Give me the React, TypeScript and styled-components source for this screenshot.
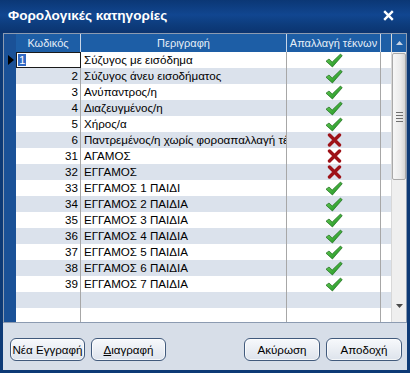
import React from "react";
import styled, { createGlobalStyle } from "styled-components";

const Global = createGlobalStyle`
  html, body { margin: 0; padding: 0; background: #ffffff; }
  body { font-family: "Liberation Sans", Arial, sans-serif; }
  * { box-sizing: border-box; }
`;

const Window = styled.div`
  width: 410px;
  height: 373px;
  background: #0d3a76;
  padding: 0 3px 3px 3px;
  display: flex;
  flex-direction: column;
`;

const TitleBar = styled.div`
  height: 33px;
  margin: 0 -3px;
  padding: 0 16px 3px 8px;
  display: flex;
  align-items: center;
  justify-content: space-between;
  background: linear-gradient(180deg, #0b3775 0%, #114690 45%, #0d3c7c 75%, #0b3470 100%);
`;

const Title = styled.div`
  color: #ffffff;
  font-weight: bold;
  font-size: 13.6px;
`;

const Body = styled.div`
  flex: 1;
  display: flex;
  flex-direction: column;
  background: #d7dee8;
`;

const GridFrame = styled.div`
  height: 290px;
  border: 1px solid #8c9bb1;
  display: flex;
  overflow: hidden;
  background: #ffffff;
`;

const Indicator = styled.div`
  width: 12px;
  background: #1a5197;
  display: flex;
  flex-direction: column;
  padding-top: 18px;
`;

const IndicatorCell = styled.div`
  height: 16px;
  display: flex;
  align-items: center;
  justify-content: center;
`;

const Arrow = styled.div`
  width: 0;
  height: 0;
  border-top: 5px solid transparent;
  border-bottom: 5px solid transparent;
  border-left: 6px solid #000000;
  margin-left: 1px;
`;

const Main = styled.div`
  flex: 1;
  display: flex;
  flex-direction: column;
  min-width: 0;
`;

const cols = "65px 206px 94px 1fr";

const HeaderRow = styled.div`
  height: 18px;
  display: grid;
  grid-template-columns: ${cols};
  background: #1d5ea6;
`;

const HeaderCell = styled.div<{ $last?: boolean }>`
  color: #e6eef8;
  font-size: 11px;
  text-align: center;
  line-height: 18px;
  white-space: nowrap;
  overflow: hidden;
  border-right: ${(p) => (p.$last ? "none" : "1px solid #c8d6e8")};
`;

const Row = styled.div<{ $alt: boolean }>`
  height: 16px;
  flex-shrink: 0;
  display: grid;
  grid-template-columns: ${cols};
  background: ${(p) => (p.$alt ? "#dbe2ec" : "#ffffff")};
`;

const Cell = styled.div<{ $align?: string; $last?: boolean }>`
  font-size: 11.6px;
  color: #000000;
  line-height: 16px;
  white-space: nowrap;
  overflow: hidden;
  padding: 0 2px 0 3px;
  border-right: ${(p) => (p.$last ? "none" : "1px solid #a7a7a7")};
  display: flex;
  align-items: center;
  justify-content: ${(p) =>
    p.$align === "right" ? "flex-end" : p.$align === "center" ? "center" : "flex-start"};
`;

const EditCell = styled.div`
  border: 1px solid #1a1a1a;
  background: #ffffff;
  display: flex;
  align-items: center;
  padding-left: 1px;
`;

const Selected = styled.span`
  background: #316ac5;
  color: #ffffff;
  font-size: 11.6px;
  line-height: 12px;
  padding: 0 1px;
`;

const ScrollBar = styled.div`
  width: 15px;
  display: flex;
  flex-direction: column;
  background: #efefef;
  border-left: 1px solid #d8d8d8;
`;

const ScrollTop = styled.div`
  height: 18px;
  background: #1d5ea6;
  display: flex;
  align-items: center;
  justify-content: center;
`;

const ScrollThumb = styled.div`
  height: 127px;
  margin: 1px 0 0 0;
  border: 1px solid #a9a9a9;
  border-radius: 2px;
  background: linear-gradient(90deg, #f7f7f7 0%, #ebebeb 60%, #d6d6d6 100%);
  display: flex;
  flex-direction: column;
  align-items: center;
  justify-content: center;
  gap: 2px;
`;

const Grip = styled.div`
  width: 7px;
  height: 1px;
  background: #6f6f6f;
`;

const ScrollTrack = styled.div`
  flex: 1;
  background: #efefef;
`;

const ScrollBottom = styled.div`
  height: 24px;
  display: flex;
  align-items: center;
  justify-content: center;
  padding-bottom: 8px;
`;

const Panel = styled.div`
  flex: 1;
  display: flex;
  align-items: flex-start;
  padding: 15px 5px 0 7px;
`;

const ButtonGroup = styled.div`
  display: flex;
  gap: 6px;
`;

const Spacer = styled.div`
  flex: 1;
`;

const Button = styled.button<{ $w: number }>`
  width: ${(p) => p.$w}px;
  height: 23px;
  border: 1px solid #415a7c;
  border-radius: 6px;
  background: linear-gradient(180deg, #f7f9fc 0%, #e9edf3 55%, #dde3ec 100%);
  font-family: "Liberation Sans", Arial, sans-serif;
  font-size: 11.6px;
  color: #000000;
  padding: 0;
  box-shadow: inset 0 0 0 1px rgba(255, 255, 255, 0.7);
`;

const Underline = styled.span`
  text-decoration: underline;
`;

const Check = () => (
  <svg width="18" height="15" viewBox="0 0 18 15">
    <defs>
      <linearGradient id="cg" x1="0" y1="0" x2="1" y2="1">
        <stop offset="0" stopColor="#6fd15a" />
        <stop offset="1" stopColor="#138a1c" />
      </linearGradient>
    </defs>
    <path
      d="M1 8.2 L4 6 L7.2 9 L15.5 1 L17.2 2.8 L7.4 14 Z"
      fill="url(#cg)"
      stroke="#1b6a1b"
      strokeWidth="0.7"
      strokeLinejoin="round"
    />
  </svg>
);

const Cross = () => (
  <svg width="15" height="14" viewBox="0 0 15 14">
    <path
      d="M2.5 2 L12.5 12 M12.5 2 L2.5 12"
      stroke="#9e1218"
      strokeWidth="3.4"
      strokeLinecap="round"
    />
  </svg>
);

const Close = () => (
  <svg width="11" height="11" viewBox="0 0 11 11">
    <path d="M1.2 1.2 L9.8 9.8 M9.8 1.2 L1.2 9.8" stroke="#ffffff" strokeWidth="2.4" />
  </svg>
);

const UpArrow = () => (
  <svg width="7" height="4" viewBox="0 0 7 4">
    <path d="M0 4 L3.5 0 L7 4 Z" fill="#c8d4e4" />
  </svg>
);

const DownArrow = () => (
  <svg width="7" height="4" viewBox="0 0 7 4">
    <path d="M0 0 L3.5 4 L7 0 Z" fill="#4a4a4a" />
  </svg>
);

const rows: [string, string, boolean][] = [
  ["1", "Σύζυγος με εισόδημα", true],
  ["2", "Σύζυγος άνευ εισοδήματος", true],
  ["3", "Ανύπαντρος/η", true],
  ["4", "Διαζευγμένος/η", true],
  ["5", "Χήρος/α", true],
  ["6", "Παντρεμένος/η χωρίς φοροαπαλλαγή τέκνων", false],
  ["31", "ΑΓΑΜΟΣ", false],
  ["32", "ΕΓΓΑΜΟΣ", false],
  ["33", "ΕΓΓΑΜΟΣ 1 ΠΑΙΔΙ", true],
  ["34", "ΕΓΓΑΜΟΣ 2 ΠΑΙΔΙΑ", true],
  ["35", "ΕΓΓΑΜΟΣ 3 ΠΑΙΔΙΑ", true],
  ["36", "ΕΓΓΑΜΟΣ 4 ΠΑΙΔΙΑ", true],
  ["37", "ΕΓΓΑΜΟΣ 5 ΠΑΙΔΙΑ", true],
  ["38", "ΕΓΓΑΜΟΣ 6 ΠΑΙΔΙΑ", true],
  ["39", "ΕΓΓΑΜΟΣ 7 ΠΑΙΔΙΑ", true],
];

export default function App() {
  return (
    <>
      <Global />
      <Window>
        <TitleBar>
          <Title>Φορολογικές κατηγορίες</Title>
          <Close />
        </TitleBar>
        <Body>
          <GridFrame>
            <Indicator>
              <IndicatorCell>
                <Arrow />
              </IndicatorCell>
            </Indicator>
            <Main>
              <HeaderRow>
                <HeaderCell>Κωδικός</HeaderCell>
                <HeaderCell>Περιγραφή</HeaderCell>
                <HeaderCell>Απαλλαγή τέκνων</HeaderCell>
                <HeaderCell $last />
              </HeaderRow>
              {rows.map(([code, desc, ok], i) => (
                <Row key={code} $alt={i % 2 === 1}>
                  {i === 0 ? (
                    <EditCell>
                      <Selected>{code}</Selected>
                    </EditCell>
                  ) : (
                    <Cell $align="right">{code}</Cell>
                  )}
                  <Cell>{desc}</Cell>
                  <Cell $align="center">{ok ? <Check /> : <Cross />}</Cell>
                  <Cell $last />
                </Row>
              ))}
              {[15, 16].map((i) => (
                <Row key={`e${i}`} $alt={i % 2 === 1}>
                  <Cell />
                  <Cell />
                  <Cell />
                  <Cell $last />
                </Row>
              ))}
            </Main>
            <ScrollBar>
              <ScrollTop>
                <UpArrow />
              </ScrollTop>
              <ScrollThumb>
                <Grip />
                <Grip />
                <Grip />
                <Grip />
              </ScrollThumb>
              <ScrollTrack />
              <ScrollBottom>
                <DownArrow />
              </ScrollBottom>
            </ScrollBar>
          </GridFrame>
          <Panel>
            <ButtonGroup>
              <Button $w={75}>Νέα Εγγραφή</Button>
              <Button $w={75}>
                <Underline>Δ</Underline>ιαγραφή
              </Button>
            </ButtonGroup>
            <Spacer />
            <ButtonGroup>
              <Button $w={76}>Ακύρωση</Button>
              <Button $w={76}>Αποδοχή</Button>
            </ButtonGroup>
          </Panel>
        </Body>
      </Window>
    </>
  );
}
